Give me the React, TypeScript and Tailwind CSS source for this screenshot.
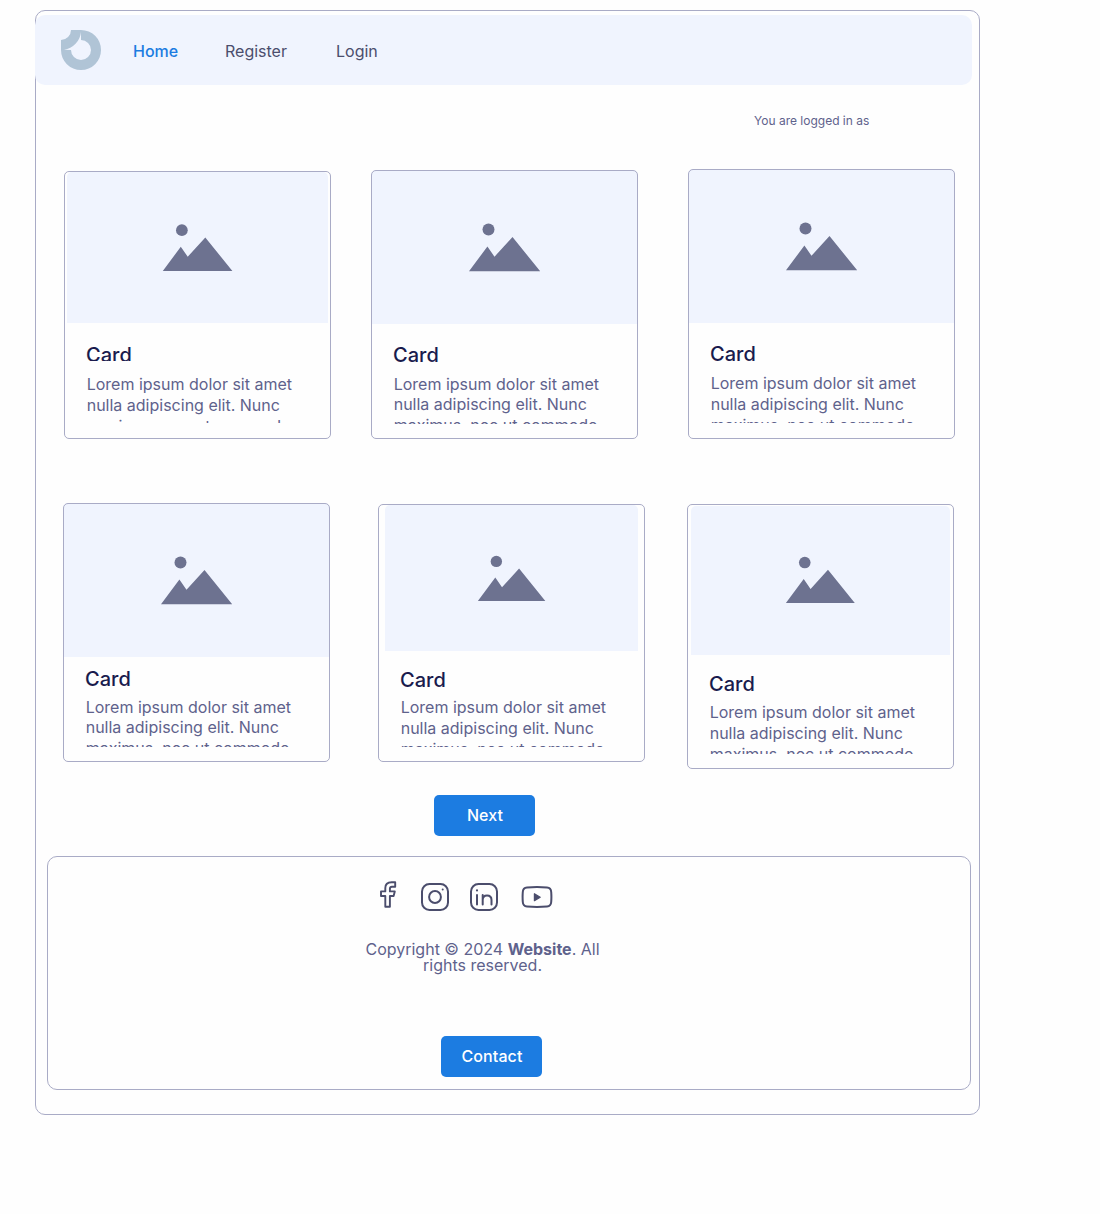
type CardProps = {
  box: string;
  image: string;
  title: string;
  body: string;
};

const cardsTop: CardProps[] = [
  { box: "w-[267px] h-[268px] mt-[2px]", image: "w-[261px] h-[150.5px] ml-[2px] mt-[0.2px] [&>svg]:-mt-[0.4px]", title: "mt-[20.3px] h-[18px]", body: "mt-[13.05px] h-[48.95px]" },
  { box: "w-[267px] h-[269px] mt-px ml-10", image: "w-[267px] h-[154px] -ml-px -mt-px", title: "mt-[19px] h-6", body: "mt-[6.65px] h-[50.35px]" },
  { box: "w-[267px] h-[270px] ml-[50px]", image: "w-[267px] h-[154px] -ml-px -mt-px", title: "mt-[19px] h-6", body: "mt-[7.05px] h-[49.95px]" },
];

const cardsBottom: CardProps[] = [
  { box: "w-[267px] h-[259px]", image: "w-[267px] h-[154px] -ml-px -mt-px", title: "mt-[10px] h-6", body: "mt-[5.65px] h-[50.35px]" },
  { box: "w-[267px] h-[258px] mt-px ml-12", image: "w-[253px] h-[146px] ml-[6px] [&>svg]:-mt-[0.4px]", title: "mt-[17px] h-6", body: "mt-[5.05px] h-[49.95px]" },
  { box: "w-[267px] h-[265px] mt-px ml-[42px]", image: "w-[258.5px] h-[149px] ml-[3px] mt-[0.5px] [&>svg]:-mt-[0.8px]", title: "mt-[17.5px] h-6", body: "mt-[6.05px] h-[51.95px]" },
];

function Placeholder({ className }: { className: string }) {
  return (
    <div className={`flex shrink-0 items-start overflow-hidden rounded-t-[5px] bg-[#f0f4fe] ${className}`}>
      <svg viewBox="0 0 267 154" className="block h-full w-full shrink-0" fill="#6d7290">
        <circle cx="117.5" cy="59.5" r="6" />
        <path d="M98 101.3 116.4 76.5 123.5 86.7 141.5 67 169.2 101.3Z" />
      </svg>
    </div>
  );
}

function Card({ box, image, title, body }: CardProps) {
  return (
    <article className={`relative flex shrink-0 flex-col rounded-[5px] ${box}`}>
      <div className="flex flex-col p-px">
        <Placeholder className={image} />
        <h2 className={`ml-[21px] shrink-0 overflow-hidden text-[20px] leading-6 font-medium text-[#191b4d] ${title}`}>Card</h2>
        <p className={`ml-[21.7px] w-[222px] shrink-0 overflow-hidden text-[16px] leading-[20.8px] text-[#5e628c] ${body}`}>
          Lorem ipsum dolor sit amet<br />nulla adipiscing elit. Nunc<br />maximus, nec ut commodo
        </p>
      </div>
      <div className="pointer-events-none absolute inset-0 rounded-[5px] border border-[#a9abc6]" />
    </article>
  );
}

function Logo() {
  return (
    <svg viewBox="0 0 40 40" className="h-10 w-10">
      <path fill="#b0c4d6" d="M10 0H20A20 20 0 1 1 0 20V10A10 10 0 0 0 10 0Z" />
      <path fill="#f0f4fe" d="M20 2A20 20 0 0 1 3 19.8L10 20A10 10 0 1 0 20 10Z" />
    </svg>
  );
}

function Socials() {
  return (
    <div className="flex h-8 items-start text-[#4b4d6c]">
      <svg viewBox="0 0 18 28" className="mt-[0.5px] ml-[330.7px] h-7 w-[18px]" fill="none" stroke="currentColor" strokeWidth="1.9" strokeLinejoin="round">
        <path d="M16.2 1.2H12.6C8.6 1.2 6.3 3.4 6.3 7V10.4H2V15H6.3V25.8H10.9V15H14.6L15.8 10.4H10.9V7.8C10.9 6.4 11.6 5.7 13 5.7H16.2Z" />
      </svg>
      <svg viewBox="0 0 28 28" className="mt-[3px] ml-[24.3px] h-7 w-7" fill="none" stroke="currentColor" strokeWidth="2">
        <rect x="1" y="1" width="26" height="26" rx="7.5" />
        <circle cx="14" cy="14" r="5.9" />
        <circle cx="21.7" cy="6.4" r="1" fill="currentColor" stroke="none" />
      </svg>
      <svg viewBox="0 0 28 28" className="mt-[3px] ml-[21px] h-7 w-7" fill="none" stroke="currentColor" strokeWidth="2" strokeLinecap="round">
        <rect x="1" y="1" width="26" height="26" rx="7.5" />
        <path d="M7 12V21.5M12.7 12V21.5M12.7 17C12.7 14 14.4 12.5 17 12.5S21.5 14 21.5 17V21.5" />
        <circle cx="7" cy="7.4" r="1.1" fill="currentColor" stroke="none" />
      </svg>
      <svg viewBox="0 0 32 22" className="mt-[6px] ml-[23px] h-[22px] w-8" fill="none" stroke="currentColor" strokeWidth="2">
        <path d="M6 1.5Q16 .7 26 1.5Q30 1.9 30.2 6Q30.6 11 30.2 16Q30 20.1 26 20.5Q16 21.3 6 20.5Q2 20.1 1.8 16Q1.4 11 1.8 6Q2 1.9 6 1.5Z" />
        <path d="M13.4 7.7V14.7L19.2 11.2Z" fill="currentColor" strokeWidth="1.2" strokeLinejoin="round" />
      </svg>
    </div>
  );
}

const button = "flex h-[41px] w-[101px] items-center justify-center rounded-[5px] bg-[#1c7ce1] pb-[2px] pl-px text-[16px] leading-5 font-medium tracking-[0.1px] text-white";

export default function App() {
  return (
    <div className="min-h-[1214px] bg-[#fefefe] pt-[10px] pl-[35px] font-['Inter',sans-serif]">
      <main className="h-[1105px] w-[945px] rounded-[10px] border border-[#a9abc6]">
        <nav className="mt-1 -ml-px flex h-[70px] w-[937px] rounded-[10px] bg-[#f0f4fe] pl-[26px] text-[16px] leading-5 text-[#4b4e6d]">
          <div className="mt-[15px]"><Logo /></div>
          <a className="mt-[26px] ml-[32px] w-[92px] font-medium text-[#1c7ce1]">Home</a>
          <a className="mt-[26px] w-[111px]">Register</a>
          <a className="mt-[26px]">Login</a>
        </nav>
        <p className="mt-[28px] ml-[718px] h-4 text-[12px] leading-4 text-[#5e628c]">You are logged in as</p>
        <section className="mt-[40px] ml-[28px] flex h-[270px] items-start">
          {cardsTop.map((card, i) => <Card key={i} {...card} />)}
        </section>
        <section className="mt-[64px] ml-[27px] flex h-[266px] items-start">
          {cardsBottom.map((card, i) => <Card key={i} {...card} />)}
        </section>
        <button className={`mt-[26px] ml-[398px] ${button}`}>Next</button>
        <footer className="mt-[20px] ml-[11px] h-[234px] w-[924px] rounded-[10px] border border-[#a9abc6] pt-[23px]">
          <Socials />
          <p className="mt-[29px] ml-[304.5px] w-[260px] text-center text-[16px] leading-4 text-[#5e628c]">
            Copyright © 2024 <strong className="font-bold">Website</strong>. All<br />rights reserved.
          </p>
          <button className={`mt-[63px] ml-[393px] ${button}`}>Contact</button>
        </footer>
      </main>
    </div>
  );
}
